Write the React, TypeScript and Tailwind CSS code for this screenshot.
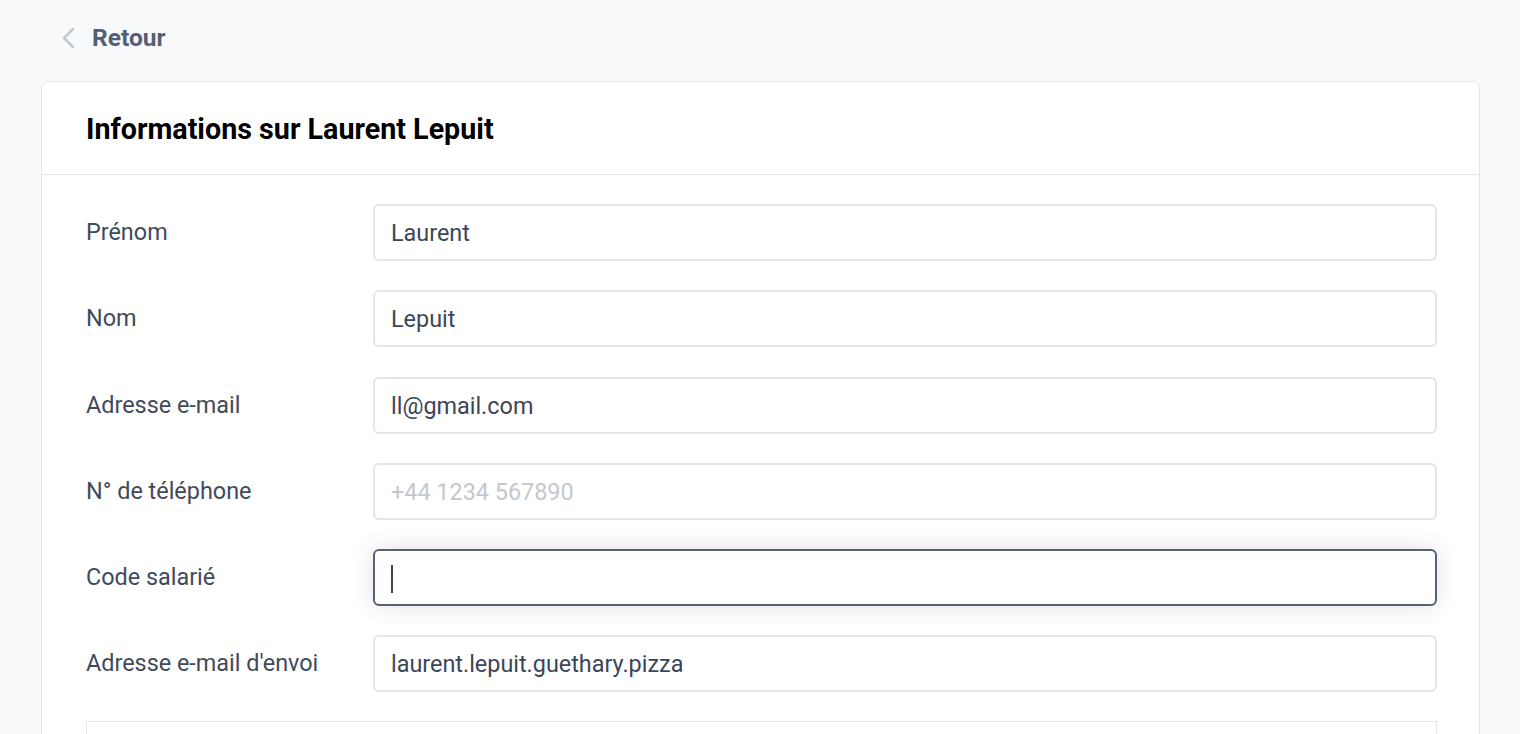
import React from "react";

const rows: { label: string; value?: string; placeholder?: string; focused?: boolean }[] = [
  { label: "Prénom", value: "Laurent" },
  { label: "Nom", value: "Lepuit" },
  { label: "Adresse e-mail", value: "ll@gmail.com" },
  { label: "N° de téléphone", placeholder: "+44 1234 567890" },
  { label: "Code salarié", focused: true },
  { label: "Adresse e-mail d'envoi", value: "laurent.lepuit.guethary.pizza" },
];

export default function App() {
  return (
    <div className="min-h-[734px] h-[734px] overflow-hidden bg-[#f8f9fb] font-['Roboto',sans-serif]">
      <div className="pl-[41px] pr-[40px] pt-[22px]">
        <div className="flex items-center h-[30px] pl-[20px] gap-[15px] pt-[2px]">
          <svg width="16" height="22" viewBox="0 0 16 22" fill="none">
            <path d="M12 2 L3 11 L12 20" stroke="#c3c9d2" strokeWidth="2.6" strokeLinecap="round" strokeLinejoin="round" />
          </svg>
          <span className="text-[24.5px] font-bold text-[#536073] leading-none">Retour</span>
        </div>
        <div className="mt-[29px] bg-white border border-[#e3e6eb] rounded-[7px]">
          <div className="h-[93px] flex items-center pl-[44px] pr-[42px] border-b border-[#e3e6eb]">
            <h1 className="text-[28.7px] font-bold text-black leading-none pt-[2px]">Informations sur Laurent Lepuit</h1>
          </div>
          <div className="pl-[44px] pr-[42px] pt-[29px] pb-[20px]">
            <div className="flex flex-col gap-[29.3px]">
              {rows.map((r) => (
                <div key={r.label} className="flex items-center">
                  <div className="w-[287px] text-[23.4px] text-[#3f4a5c]">{r.label}</div>
                  <div
                    className={
                      "flex-1 h-[57px] rounded-[6px] border-2 bg-white flex items-center px-[16px] pt-[2px] text-[23.4px] " +
                      (r.focused
                        ? "border-[#556275] shadow-[0_0_24px_rgba(0,0,0,0.12)]"
                        : "border-[#e2e5ea]")
                    }
                  >
                    {r.focused ? (
                      <span className="w-[2px] h-[28px] bg-[#3c4657]" />
                    ) : r.value ? (
                      <span className="text-[#3c4657]">{r.value}</span>
                    ) : (
                      <span className="text-[#c3c8cf]">{r.placeholder}</span>
                    )}
                  </div>
                </div>
              ))}
            </div>
            <div className="mt-[29px] h-[60px] border border-[#e3e6eb]" />
          </div>
        </div>
      </div>
    </div>
  );
}
